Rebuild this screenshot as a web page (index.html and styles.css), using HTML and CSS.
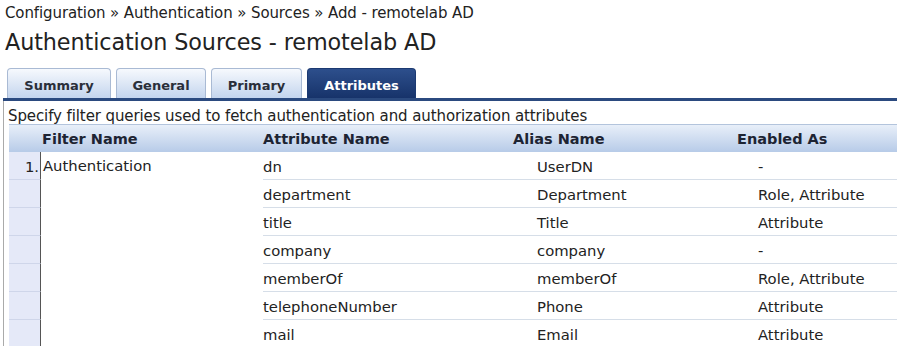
FILE: index.html
```html
<!DOCTYPE html>
<html lang="en">
<head>
  <meta charset="UTF-8" />
  <title>Authentication Sources - remotelab AD</title>
  <link rel="stylesheet" href="styles.css">
</head>
<body>

  <div class="crumbs">Configuration &raquo; Authentication &raquo; Sources &raquo; Add - remotelab AD</div>
  <h1>Authentication Sources - remotelab AD</h1>

  <!-- Tabs -->
  <div class="tabs">
    <div class="tab tab-summary">Summary</div>
    <div class="tab tab-general">General</div>
    <div class="tab tab-primary">Primary</div>
    <div class="tab tab-attrs active">Attributes</div>
  </div>

  <div class="panel">
    <p class="hint">Specify filter queries used to fetch authentication and authorization attributes</p>

    <div class="thead">
      <div class="th th-filter">Filter Name</div>
      <div class="th th-attr">Attribute Name</div>
      <div class="th th-alias">Alias Name</div>
      <div class="th th-enabled">Enabled As</div>
    </div>

    <div class="tbody">
      <div class="idx">1.</div>
      <div class="filter">Authentication</div>
      <div class="cell">dn</div><div class="cell">UserDN</div><div class="cell">-</div>

      <div class="idx"></div>
      <div class="cell">department</div><div class="cell">Department</div><div class="cell">Role, Attribute</div>

      <div class="idx"></div>
      <div class="cell">title</div><div class="cell">Title</div><div class="cell">Attribute</div>

      <div class="idx"></div>
      <div class="cell">company</div><div class="cell">company</div><div class="cell">-</div>

      <div class="idx"></div>
      <div class="cell">memberOf</div><div class="cell">memberOf</div><div class="cell">Role, Attribute</div>

      <div class="idx"></div>
      <div class="cell">telephoneNumber</div><div class="cell">Phone</div><div class="cell">Attribute</div>

      <div class="idx"></div>
      <div class="cell">mail</div><div class="cell">Email</div><div class="cell">Attribute</div>
    </div>
  </div>

</body>
</html>
```

FILE: styles.css
```css
body {
  font-family: "DejaVu Sans", Verdana, sans-serif;
  margin: 0;
  padding: 0;
  background: white;
  color: #222;
  overflow: hidden;
}

.crumbs {
  font-size: 15px;
  padding: 4px 0 0 5px;
  height: 20px;
  letter-spacing: -0.1px;
}

h1 {
  font-size: 22.3px;
  font-weight: normal;
  margin: 5px 0 0 5px;
  height: 32px;
  letter-spacing: -0.1px;
}

.tabs {
  display: flex;
  gap: 5px;
  margin: 8px 0 0 3px;
  padding-left: 4px;
  border-bottom: 3px solid #2b4a7f;
  height: 29px;
  align-items: flex-end;
}

.tab {
  height: 30px;
  box-sizing: border-box;
  border: 1px solid #a9bad4;
  border-bottom: none;
  border-radius: 4px 4px 0 0;
  background: linear-gradient(#f6f9fd, #c4d5ee);
  font-size: 13px;
  font-weight: bold;
  color: #2a2f3a;
  text-align: center;
  padding-top: 9px;
}

.tab-summary { width: 104px; }
.tab-general { width: 90px; }
.tab-primary { width: 91px; }
.tab-attrs { width: 109px; }

.tab.active {
  background: linear-gradient(#2d4f8c, #17336a);
  border-color: #1c3a72;
  color: white;
}

.panel {
  margin-left: 3px;
  border-left: 1px solid #aaaaaa;
  padding-left: 5px;
  height: 260px;
}

.hint {
  font-size: 15px;
  margin: 0 0 0 -1px;
  padding: 7px 0 0 0;
  height: 16px;
  letter-spacing: -0.1px;
  line-height: 16px;
}

.thead {
  display: flex;
  height: 28px;
  box-sizing: border-box;
  border-top: 1px solid #b3c4dc;
  background: linear-gradient(#e8eff9, #b7cbe8);
  font-size: 14.5px;
  font-weight: bold;
  align-items: center;
  color: #1d2433;
}

.th-filter { width: 254px; padding-left: 33px; box-sizing: border-box; }
.th-attr { width: 250px; }
.th-alias { width: 224px; }

.tbody {
  display: grid;
  grid-template-columns: 32px 222px 274px 221px 1fr;
  grid-auto-rows: 28px;
  font-size: 14.8px;
}

.idx {
  grid-column: 1;
  background: #e5e9f8;
  border-right: 1px solid #555;
  border-bottom: 1px solid #cfd6ea;
  text-align: right;
  padding: 6px 1px 0 0;
  box-sizing: border-box;
}

.filter {
  grid-column: 2;
  grid-row: 1 / span 7;
  padding: 5px 0 0 2px;
}

.cell {
  border-bottom: 1px solid #d6dee8;
  padding-top: 6px;
  box-sizing: border-box;
  white-space: nowrap;
}
```
